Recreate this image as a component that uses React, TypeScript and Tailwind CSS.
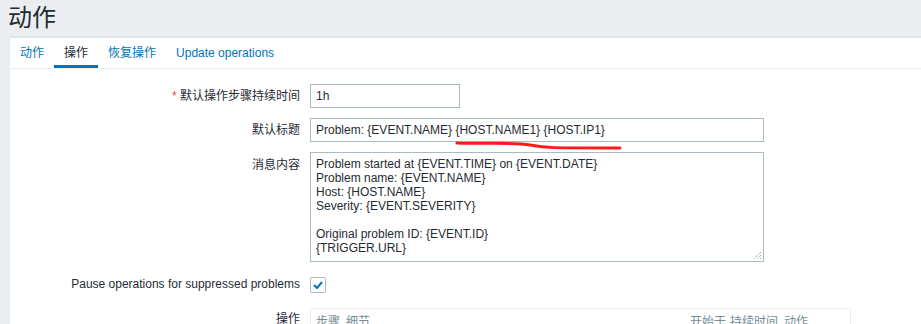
import React from "react";

const tabs = [
  { label: "动作", active: false },
  { label: "操作", active: true },
  { label: "恢复操作", active: false },
  { label: "Update operations", active: false },
];

const message = [
  "Problem started at {EVENT.TIME} on {EVENT.DATE}",
  "Problem name: {EVENT.NAME}",
  "Host: {HOST.NAME}",
  "Severity: {EVENT.SEVERITY}",
  "",
  "Original problem ID: {EVENT.ID}",
  "{TRIGGER.URL}",
];

function Row({ label, top, children }: { label: React.ReactNode; top?: boolean; children: React.ReactNode }) {
  return (
    <div className={`flex ${top ? "items-start" : "items-center"}`}>
      <div className={`w-[300px] shrink-0 pr-[10px] text-right ${top ? "pt-[4px]" : ""}`}>{label}</div>
      {children}
    </div>
  );
}

export default function App() {
  return (
    <div
      className="relative h-[324px] w-[921px] overflow-hidden bg-[#ebeef0] text-[12px] text-[#1f2c33]"
      style={{ fontFamily: '"Liberation Sans", "Noto Sans CJK SC", Arial, sans-serif' }}
    >
      <div className="h-[36px] pl-[8px] pt-[4px] text-[24px] leading-[28px]">动作</div>
      <div className="ml-[10px] h-full border-t-2 border-[#dfe4e7] bg-white">
        <div className="flex h-[31px] border-b border-[#ebeef0]">
          {tabs.map((t) => (
            <div
              key={t.label}
              className={`flex items-center border-b-[3px] px-[10px] pt-[3px] ${
                t.active ? "border-[#0275b8] text-[#1f2c33]" : "border-transparent text-[#0275b8]"
              }`}
            >
              {t.label}
            </div>
          ))}
        </div>

        <div className="flex flex-col gap-[10px] pt-[15px]">
          <Row
            label={
              <>
                <span className="text-[#e54251]">*</span> 默认操作步骤持续时间
              </>
            }
          >
            <div className="flex h-[24px] w-[150px] items-center border border-[#acbbc2] px-[5px] text-[#1f2c33]">
              1h
            </div>
          </Row>
          <Row label="默认标题">
            <div className="flex h-[24px] w-[454px] items-center border border-[#acbbc2] px-[5px]">
              Problem: {"{EVENT.NAME}"} {"{HOST.NAME1}"} {"{HOST.IP1}"}
            </div>
          </Row>
          <Row label="消息内容" top>
            <div className="relative h-[110px] w-[454px] border border-[#acbbc2] px-[5px] pt-[4px] leading-[14px]">
              {message.map((l, i) => (
                <div key={i} className="h-[14px]">
                  {l}
                </div>
              ))}
              <svg className="absolute bottom-[1px] right-[1px]" width="9" height="9" viewBox="0 0 9 9">
                <path d="M8 1 L1 8 M8 4 L4 8 M8 7 L7 8" stroke="#888" strokeWidth="1" strokeDasharray="1 1" />
              </svg>
            </div>
          </Row>
          <Row label="Pause operations for suppressed problems">
            <div className="flex h-[24px] items-center pt-[2px]">
              <div className="flex h-[16px] w-[16px] items-center justify-center rounded-[2px] border border-[#acbbc2]">
                <svg width="10" height="8" viewBox="0 0 10 8">
                  <path d="M1 4 L4 7 L9 1" fill="none" stroke="#0275b8" strokeWidth="2" />
                </svg>
              </div>
            </div>
          </Row>
          <Row label="操作" top>
            <div className="mt-[2px] h-[40px] w-[541px] border border-[#ebeef0] px-[5px] pt-[4px] text-[#768d99]">
              <div className="flex">
                <span className="w-[30px]">步骤</span>
                <span className="w-[344px]">细节</span>
                <span className="w-[40px]">开始于</span>
                <span className="w-[54px]">持续时间</span>
                <span>动作</span>
              </div>
            </div>
          </Row>
        </div>
      </div>

      <svg className="pointer-events-none absolute left-0 top-0" width="921" height="324">
        <path
          d="M457 143 C 490 144, 515 142, 530 145 S 550 148, 620 148"
          fill="none"
          stroke="#ff1a1a"
          strokeWidth="3"
          strokeLinecap="round"
        />
      </svg>
    </div>
  );
}
